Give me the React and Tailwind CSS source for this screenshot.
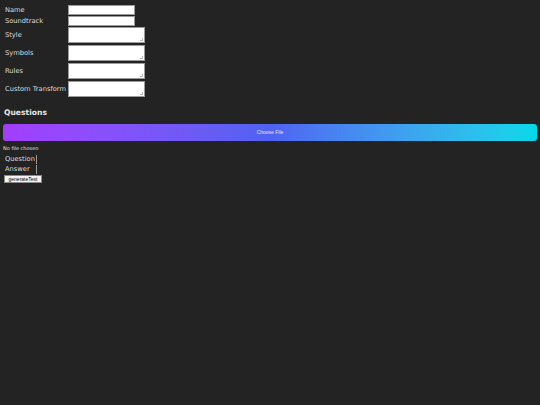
export default function App() {
  const labels = [
    { t: "Name", h: "h-[10px]", w: "w-[67px]" },
    { t: "Soundtrack", h: "h-[10px]", w: "w-[67px]" },
  ];
  const areas = ["Style", "Symbols", "Rules", "Custom Transform"];
  return (
    <div
      className="w-[540px] h-[405px] bg-[#232323] text-[#dcdcdc] overflow-hidden"
      style={{ fontFamily: '"DejaVu Sans", sans-serif' }}
    >
      <div className="pt-[5px] pl-[5px] flex flex-col">
        {labels.map((l, i) => (
          <div key={l.t} className={`flex items-center ${i === 0 ? "" : "mt-[1px]"}`}>
            <div className="w-[63px] text-[6.7px] leading-[10px]">{l.t}</div>
            <div className="w-[67px] h-[10px] bg-white border border-[#9a9a9a]" />
          </div>
        ))}
        {areas.map((t, i) => (
          <div key={t} className={`flex items-center ${i === 0 ? "mt-[1px]" : "mt-[2px]"}`}>
            <div className="w-[63px] text-[6.7px] leading-[10px] whitespace-nowrap">{t}</div>
            <div className="relative w-[77px] h-[16px] bg-white border border-[#9a9a9a]">
              <div className="absolute right-[1px] bottom-[1px] w-[3px] h-[3px] border-r border-b border-[#bbbbbb]" />
            </div>
          </div>
        ))}
      </div>
      <div className="pl-[4px] mt-[11px] text-[7.6px] font-bold leading-[10px] text-[#e6e6e6]">
        Questions
      </div>
      <div className="px-[3px] mt-[6px]">
        <div className="h-[17px] rounded-[3px] bg-gradient-to-r from-[#a33dff] via-[#4f62f2] to-[#00d9e8] flex items-center justify-center">
          <span
            className="text-[5px] text-[#e8e4ff]"
            style={{ fontFamily: '"Liberation Sans", sans-serif' }}
          >
            Choose File
          </span>
        </div>
      </div>
      <div className="pl-[3px] mt-[4px] text-[5px] leading-[6px] text-[#e0e0e0]">No file chosen</div>
      <div className="pl-[5px] mt-[3px] flex items-center text-[6.7px] leading-[10px]">
        <span>Question</span>
        <span className="ml-[1px] w-[1px] h-[9px] bg-[#9a9a9a]" />
      </div>
      <div className="pl-[5px] flex items-center text-[6.7px] leading-[10px]">
        <span>Answer</span>
        <span className="ml-[6px] w-[1px] h-[9px] bg-[#9a9a9a]" />
      </div>
      <div className="pl-[4px] mt-[1px] flex">
        <div
          className="flex items-center justify-center w-[38px] h-[8px] bg-[#f4f4f4] border border-[#8a8a8a] text-[5px] leading-[6px] text-black"
          style={{ fontFamily: '"Liberation Sans", sans-serif' }}
        >
          generateTest
        </div>
      </div>
    </div>
  );
}
